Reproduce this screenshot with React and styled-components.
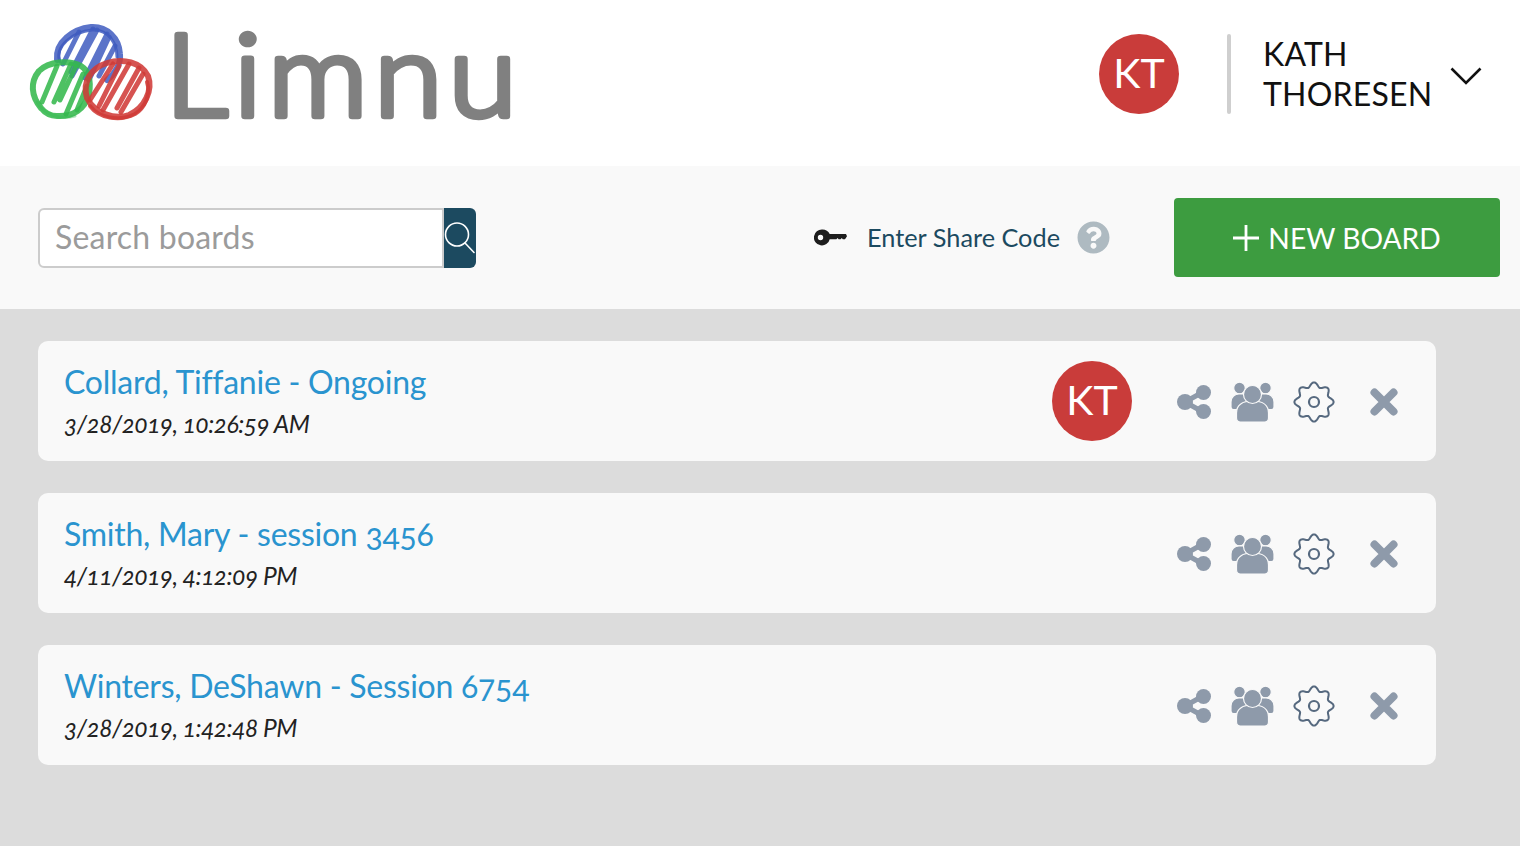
import React from 'react';
import styled, { createGlobalStyle } from 'styled-components';
import { FaQuestionCircle } from 'react-icons/fa';

const boards = [
    { id: 1, name: 'Collard, Tiffanie - Ongoing', date: '3/28/2019, 10:26:59 AM', owner: 'KT' },
    { id: 2, name: 'Smith, Mary - session 3456', date: '4/11/2019, 4:12:09 PM' },
    { id: 3, name: 'Winters, DeShawn - Session 6754', date: '3/28/2019, 1:42:48 PM' },
];

// wavy outline for the settings cog
const gearPath = (() => {
    const pts = [];
    for (let i = 0; i < 160; i++) {
        const a = (i / 160) * Math.PI * 2;
        const r = 17.4 + 2.2 * Math.cos(a * 8);
        pts.push(`${(21 + r * Math.cos(a)).toFixed(2)} ${(21 + r * Math.sin(a)).toFixed(2)}`);
    }
    return 'M' + pts.join('L') + 'Z';
})();

const LogoMark = () => (
    <svg width="126" height="100" viewBox="0 0 126 100" fill="none" strokeLinecap="round" strokeLinejoin="round">
        <defs>
            <filter id="soft"><feGaussianBlur stdDeviation="0.7" /></filter>
        </defs>
        <g filter="url(#soft)">
            <g stroke="#3f5cc0" strokeOpacity="0.85">
                <path strokeWidth="6" d="M28 36C26 18 44 5 62 3C78 2 90 14 91 30C92 40 86 50 78 56" />
                <path strokeWidth="3" d="M31 38C25 22 44 8 63 6C80 5 88 20 88 33" />
                <path strokeWidth="5" d="M34 40L50 8M42 48L64 5M43 52L68 6M56 54L78 10M60 56L80 13M70 52L86 22" />
            </g>
            <g stroke="#35b84e" strokeOpacity="0.88">
                <path strokeWidth="6" d="M12 84C2 72 1 58 10 47C20 37 40 36 52 42C60 47 62 58 60 70C56 85 44 93 28 92C20 92 16 89 12 84" />
                <path strokeWidth="3" strokeOpacity="0.4" d="M8 78C14 90 30 96 46 92" />
                <path strokeWidth="5" d="M13 78L28 42M25 78L42 40M31 76L47 42M37 90L54 50M48 86L58 62" />
            </g>
            <g stroke="#d03c38" strokeOpacity="0.88">
                <path strokeWidth="6" d="M58 74C53 58 62 44 78 39C94 34 112 38 119 52C124 66 116 84 100 91C86 96 66 90 58 74" />
                <path strokeWidth="4" d="M61 82C70 94 90 98 106 90C116 84 122 70 118 58" />
                <path strokeWidth="5" d="M61 76L84 40M70 82L90 42M74 86L100 40M88 84L110 44M92 88L114 50" />
            </g>
        </g>
    </svg>
);

const KeyIcon = () => (
    <svg width="33" height="17" viewBox="0 0 33 17">
        <path
            fillRule="evenodd"
            fill="#1d1d1d"
            d="M8.500 .5a8 8 0 0 1 7.200 4.600H32l1 2.200-2 2.900h-2.200l-1-1.200-1.200 1.200h-2l-1-1.200-1.200 1.200h-6.700a8 8 0 1 1-7.200-9.700zM6.500 5.800a2.700 2.700 0 1 0 0 5.400 2.700 2.700 0 0 0 0-5.400z"
        />
    </svg>
);

const SearchIcon = () => (
    <svg width="32" height="36" viewBox="0 0 32 36" fill="none" stroke="#fff" strokeWidth="1.6">
        <circle cx="13" cy="14.5" r="11.5" />
        <path d="M21 23 L30 32.5" strokeLinecap="round" />
    </svg>
);

const Chevron = () => (
    <ChevronSvg width="32" height="18" viewBox="0 0 32 18" fill="none" stroke="#111" strokeWidth="2.6">
        <path d="M1.500 1.500 L16 16 L30.500 1.500" />
    </ChevronSvg>
);

const PlusIcon = () => (
    <svg width="26" height="26" viewBox="0 0 26 26" stroke="#fff" strokeWidth="2.8">
        <path d="M13 0V26M0 13H26" />
    </svg>
);

const ShareIcon = () => (
    <svg width="34" height="34" viewBox="0 0 34 34" fill="currentColor">
        <path d="M8 17L26 7M8 17L26 27" stroke="currentColor" strokeWidth="5" />
        <circle cx="8" cy="17" r="8" />
        <circle cx="26.500" cy="7.500" r="7.500" />
        <circle cx="26.500" cy="26.500" r="7.500" />
    </svg>
);

const UsersIcon = () => (
    <svg width="43" height="40" viewBox="0 0 43 40" fill="currentColor" stroke="#f9f9f9" strokeWidth="1.2">
        <circle cx="8.500" cy="6" r="5.800" />
        <circle cx="34.500" cy="6" r="5.800" />
        <path d="M0 20c0-5 4-8 8-8h27c4 0 8 3 8 8v5c0 1.500-1 2.500-2.500 2.500h-38C1 27.500 0 26.500 0 25z" />
        <path d="M5.500 31c0-8 6-12 16-12s16 4 16 12v5c0 2.500-1.500 4-4 4h-24c-2.500 0-4-1.500-4-4z" />
        <circle cx="21.500" cy="12.500" r="9" />
    </svg>
);

const Gear = () => (
    <svg width="42" height="42" viewBox="0 0 42 42" fill="none" stroke="#56697f" strokeWidth="2">
        <path d={gearPath} />
        <circle cx="21" cy="21" r="5" strokeWidth="2.200" />
    </svg>
);

const CloseIcon = () => (
    <svg width="28" height="28" viewBox="0 0 28 28" stroke="currentColor" strokeWidth="8" strokeLinecap="round">
        <path d="M4.500 4.500L23.500 23.500M23.500 4.500L4.500 23.500" />
    </svg>
);

const BoardRow = ({ name, date, owner }) => (
    <Card>
        <Info>
            <Title>{name}</Title>
            <DateText>{date}</DateText>
        </Info>
        {owner && <Avatar>{owner}</Avatar>}
        <Actions>
            <ActionSlot $w={34} $mr={20}><ShareIcon /></ActionSlot>
            <ActionSlot $w={43} $mr={19}><UsersIcon /></ActionSlot>
            <ActionSlot $w={42} $mr={35}><Gear /></ActionSlot>
            <ActionSlot $w={28}><CloseIcon /></ActionSlot>
        </Actions>
    </Card>
);

const App = () => (
    <Page>
        <GlobalStyle />
        <Header>
            <Logo>
                <LogoMark />
                <Wordmark width="360" height="136" viewBox="0 0 360 136">
                    <text x="0" y="110" transform="scale(1.085 1)">Limnu</text>
                </Wordmark>
            </Logo>
            <UserArea>
                <Avatar>KT</Avatar>
                <Divider />
                <UserName>KATH<br />THORESEN</UserName>
                <Chevron />
            </UserArea>
        </Header>
        <Toolbar>
            <SearchBox>
                <SearchInput>Search boards</SearchInput>
                <SearchButton><SearchIcon /></SearchButton>
            </SearchBox>
            <ShareCode>
                <KeyIcon />
                <ShareText>Enter Share Code</ShareText>
                <FaQuestionCircle size={33} color="#aebac1" />
            </ShareCode>
            <NewBoard><PlusIcon />NEW BOARD</NewBoard>
        </Toolbar>
        <BoardList>
            {boards.map((b) => <BoardRow key={b.id} {...b} />)}
        </BoardList>
    </Page>
);

export default App;

const GlobalStyle = createGlobalStyle`
    html, body {
        margin: 0;
        padding: 0;
        background: #dcdcdc;
        font-family: Lato, "Open Sans", sans-serif;
    }
`;

const Page = styled.div`
    width: 1520px;
    height: 846px;
    overflow: hidden;
    background: #dcdcdc;
`;

const Header = styled.header`
    height: 166px;
    background: #fff;
    display: flex;
    align-items: center;
    justify-content: space-between;
    padding: 0 38px 18px 29px;
    box-sizing: border-box;
`;

const Logo = styled.div`
    display: flex;
    align-items: center;
    gap: 10px;
`;

const Wordmark = styled.svg`
    overflow: visible;
    text {
        font-family: Lato, sans-serif;
        font-size: 114px;
        font-weight: 300;
        letter-spacing: 6px;
        fill: #808080;
        stroke: #808080;
        stroke-width: 6.500px;
        stroke-linejoin: round;
    }
`;

const UserArea = styled.div`
    display: flex;
    align-items: center;
`;

const Avatar = styled.div`
    width: 80px;
    height: 80px;
    border-radius: 50%;
    background: #c93c3a;
    color: #fff;
    font-size: 41px;
    padding-bottom: 3px;
    box-sizing: border-box;
    display: flex;
    align-items: center;
    justify-content: center;
    flex: none;
`;

const Divider = styled.div`
    width: 4px;
    height: 80px;
    background: #cfcfcf;
    border-radius: 2px;
    margin: 0 32px 0 48px;
`;

const UserName = styled.div`
    width: 169px;
    font-size: 32px;
    letter-spacing: 0.2px;
    line-height: 40px;
    color: #111;
    margin-right: 18px;
    white-space: nowrap;
`;

const ChevronSvg = styled.svg`
    margin-top: 4px;
`;

const Toolbar = styled.div`
    height: 143px;
    background: #f9f9f9;
    display: flex;
    align-items: center;
    padding: 0 20px 0 38px;
    box-sizing: border-box;
`;

const SearchBox = styled.div`
    display: flex;
    width: 438px;
    height: 60px;
`;

const SearchInput = styled.div`
    flex: 1;
    background: #fff;
    border: 2px solid #cccccc;
    border-radius: 6px 0 0 6px;
    padding-left: 15px;
    font-size: 32px;
    letter-spacing: 0.2px;
    line-height: 54px;
    color: #9b9b9b;
`;

const SearchButton = styled.div`
    width: 32px;
    background: #1c4a60;
    border-radius: 0 6px 6px 0;
    display: flex;
    align-items: center;
    justify-content: center;
`;

const ShareCode = styled.div`
    display: flex;
    align-items: center;
    margin-left: auto;
    margin-right: 64px;
`;

const ShareText = styled.span`
    font-size: 25.300px;
    color: #1c4a60;
    margin: 0 17px 0 20px;
    padding-bottom: 2px;
`;

const NewBoard = styled.div`
    width: 326px;
    height: 79px;
    background: #3d9c40;
    border-radius: 4px;
    color: #fff;
    font-size: 28.200px;
    display: flex;
    align-items: center;
    justify-content: center;
    gap: 9px;
`;

const BoardList = styled.main`
    display: flex;
    flex-direction: column;
    gap: 32px;
    padding: 32px 84px 0 38px;
`;

const Card = styled.section`
    height: 120px;
    background: #f9f9f9;
    border-radius: 10px;
    display: flex;
    align-items: center;
    padding: 0 38px 0 26px;
    box-sizing: border-box;
`;

const Info = styled.div`
    flex: 1;
    display: flex;
    flex-direction: column;
    padding-bottom: 4px;
`;

const Title = styled.div`
    font-size: 32px;
    letter-spacing: -0.25px;
    line-height: 40px;
    margin-top: 4px;
    color: #2a94cf;
    font-feature-settings: "onum";
`;

const DateText = styled.div`
    font-size: 24.500px;
    letter-spacing: -0.5px;
    line-height: 32px;
    margin-top: 6px;
    font-style: italic;
    color: #222;
    font-feature-settings: "onum";
`;

const Actions = styled.div`
    display: flex;
    align-items: center;
    margin: 2px 0 0 45px;
    color: #8e9aaa;
`;

const ActionSlot = styled.div`
    width: ${(p) => p.$w}px;
    margin-right: ${(p) => p.$mr || 0}px;
    display: flex;
    justify-content: center;
`;
